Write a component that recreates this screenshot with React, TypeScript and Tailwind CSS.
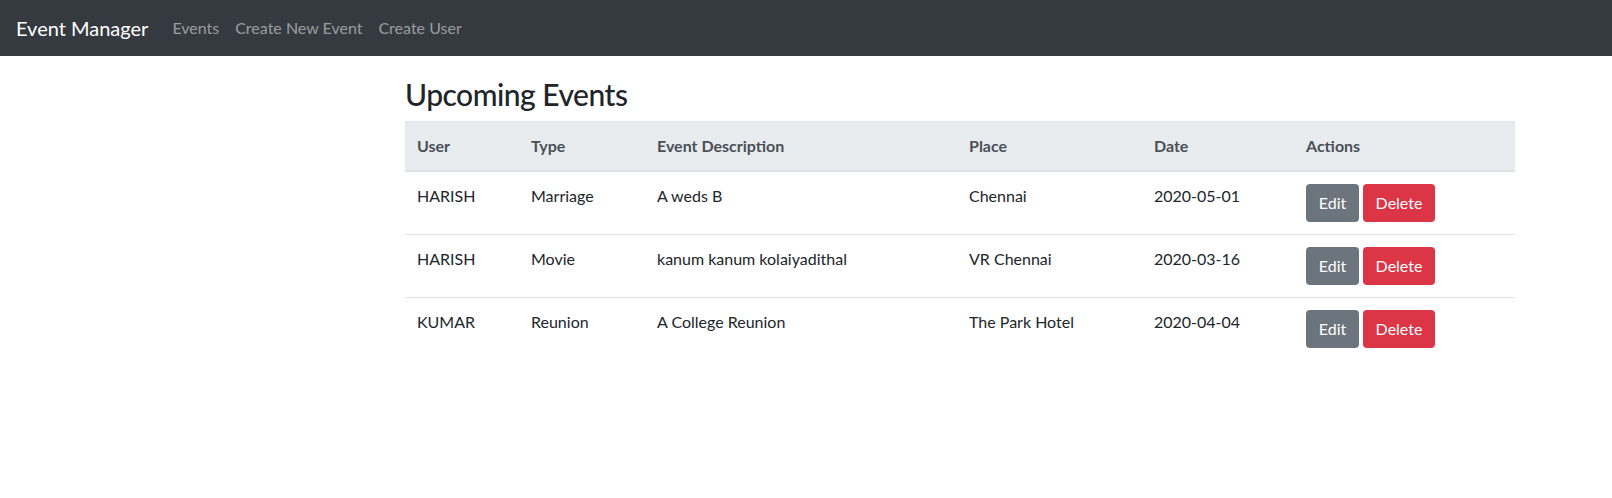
import React from 'react';

interface EventRow {
  user: string;
  type: string;
  description: string;
  place: string;
  date: string;
}

const events: EventRow[] = [
  { user: 'HARISH', type: 'Marriage', description: 'A weds B', place: 'Chennai', date: '2020-05-01' },
  { user: 'HARISH', type: 'Movie', description: 'kanum kanum kolaiyadithal', place: 'VR Chennai', date: '2020-03-16' },
  { user: 'KUMAR', type: 'Reunion', description: 'A College Reunion', place: 'The Park Hotel', date: '2020-04-04' },
];

const font = { fontFamily: 'Lato, "Noto Sans", Arial, sans-serif' };

function Navbar() {
  return (
    <nav className="flex h-[56px] items-center bg-[#343a40] px-4">
      <span className="mr-4 text-[20px] leading-[30px] text-white">Event Manager</span>
      <div className="flex">
        {['Events', 'Create New Event', 'Create User'].map((l) => (
          <a key={l} className="px-2 text-[16px] leading-6 text-white/50">
            {l}
          </a>
        ))}
      </div>
    </nav>
  );
}

export default function App() {
  return (
    <div className="min-h-[498px] bg-white text-[#212529]" style={font}>
      <Navbar />
      <div className="ml-[405px] w-[1110px] pt-[19px]">
        <h2 className="mb-2 text-[30px] font-medium leading-[38px] tracking-[-0.5px]">Upcoming Events</h2>
        <table className="w-full table-fixed text-[16px] leading-6">
          <colgroup>
            <col className="w-[114px]" />
            <col className="w-[126px]" />
            <col className="w-[312px]" />
            <col className="w-[185px]" />
            <col className="w-[152px]" />
            <col className="w-[221px]" />
          </colgroup>
          <thead>
            <tr className="bg-[#e9ecef] text-left text-[#495057]">
              {['User', 'Type', 'Event Description', 'Place', 'Date', 'Actions'].map((h) => (
                <th key={h} className="border-t border-b-2 border-[#dee2e6] p-3 font-bold">
                  {h}
                </th>
              ))}
            </tr>
          </thead>
          <tbody>
            {events.map((e, i) => (
              <tr key={i} className="align-top">
                <td className={`p-3 ${i > 0 ? 'border-t border-[#dee2e6]' : ''}`}>{e.user}</td>
                <td className={`p-3 ${i > 0 ? 'border-t border-[#dee2e6]' : ''}`}>{e.type}</td>
                <td className={`p-3 ${i > 0 ? 'border-t border-[#dee2e6]' : ''}`}>{e.description}</td>
                <td className={`p-3 ${i > 0 ? 'border-t border-[#dee2e6]' : ''}`}>{e.place}</td>
                <td className={`p-3 ${i > 0 ? 'border-t border-[#dee2e6]' : ''}`}>{e.date}</td>
                <td className={`p-3 ${i > 0 ? 'border-t border-[#dee2e6]' : ''}`}>
                  <div className="flex gap-1">
                    <button className="h-[38px] w-[53px] rounded bg-[#6c757d] text-white">Edit</button>
                    <button className="h-[38px] w-[72px] rounded bg-[#dc3545] text-white">Delete</button>
                  </div>
                </td>
              </tr>
            ))}
          </tbody>
        </table>
      </div>
    </div>
  );
}
